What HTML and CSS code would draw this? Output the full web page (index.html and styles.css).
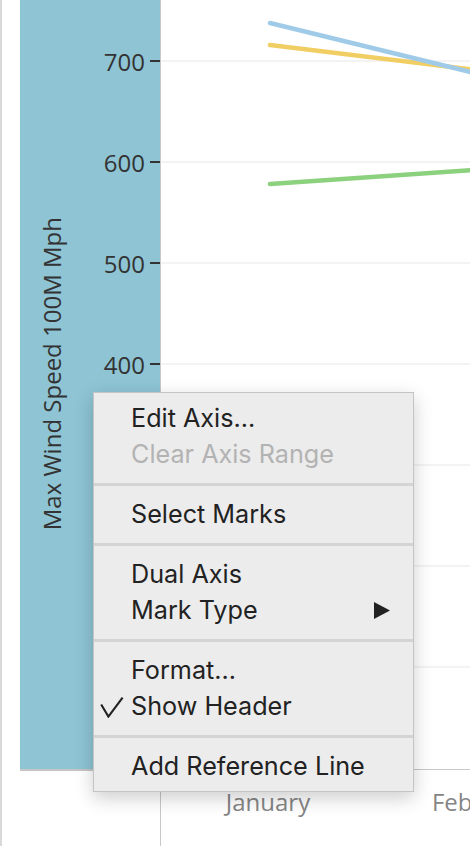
FILE: index.html
```html
<!DOCTYPE html>
<html>
<head>
<meta charset="utf-8">
<link rel="stylesheet" href="styles.css">
</head>
<body>
<div class="page">
  <div class="gutter"></div>
  <div class="left">
    <div class="axis">
      <div class="title-col"><span class="title">Max Wind Speed 100M Mph</span></div>
      <div class="ticks">
        <div class="tick"><span class="tick-label">700</span><span class="tick-mark"></span></div>
        <div class="tick"><span class="tick-label">600</span><span class="tick-mark"></span></div>
        <div class="tick"><span class="tick-label">500</span><span class="tick-mark"></span></div>
        <div class="tick"><span class="tick-label">400</span><span class="tick-mark"></span></div>
        <div class="tick"><span class="tick-label">300</span><span class="tick-mark"></span></div>
        <div class="tick"><span class="tick-label">200</span><span class="tick-mark"></span></div>
        <div class="tick"><span class="tick-label">100</span><span class="tick-mark"></span></div>
      </div>
    </div>
  </div>
  <div class="plot">
    <svg class="chart" width="309" height="769" viewBox="0 0 309 769">
      <g stroke="#efefef" stroke-width="1.5">
        <line x1="0" y1="61" x2="309" y2="61"/>
        <line x1="0" y1="162" x2="309" y2="162"/>
        <line x1="0" y1="263" x2="309" y2="263"/>
        <line x1="0" y1="364" x2="309" y2="364"/>
        <line x1="0" y1="465" x2="309" y2="465"/>
        <line x1="0" y1="566" x2="309" y2="566"/>
        <line x1="0" y1="667" x2="309" y2="667"/>
      </g>
      <g fill="none" stroke-width="4.5" stroke-linecap="round">
        <line x1="109" y1="184" x2="320" y2="169.5" stroke="#8cd17d"/>
        <line x1="109" y1="45" x2="320" y2="70.5" stroke="#f1ce63"/>
        <line x1="109" y1="23" x2="320" y2="74.5" stroke="#a0cbe8"/>
      </g>
    </svg>
    <div class="xaxis">
      <div class="xcat">January</div>
      <div class="xcat">February</div>
    </div>
  </div>
</div>

<div class="menu">
  <div class="item"><span class="check"></span><span class="label">Edit Axis...</span></div>
  <div class="item disabled"><span class="check"></span><span class="label">Clear Axis Range</span></div>
  <div class="sep"></div>
  <div class="item"><span class="check"></span><span class="label">Select Marks</span></div>
  <div class="sep"></div>
  <div class="item"><span class="check"></span><span class="label">Dual Axis</span></div>
  <div class="item"><span class="check"></span><span class="label">Mark Type</span>
    <svg class="arrow" width="16" height="17" viewBox="0 0 16 17"><polygon points="0,0 16,8.5 0,17" fill="#222"/></svg>
  </div>
  <div class="sep"></div>
  <div class="item"><span class="check"></span><span class="label">Format...</span></div>
  <div class="item"><span class="check"><svg class="tick-icon" width="24" height="21" viewBox="0 0 24 21"><polyline points="1.2,7.5 8.4,19.6 22.6,0.6" fill="none" stroke="#222" stroke-width="2.1" stroke-linejoin="miter"/></svg></span><span class="label">Show Header</span></div>
  <div class="sep"></div>
  <div class="item"><span class="check"></span><span class="label">Add Reference Line</span></div>
</div>
</body>
</html>
```

FILE: styles.css
```css
html, body {
  margin: 0;
  padding: 0;
}
body {
  width: 470px;
  height: 846px;
  overflow: hidden;
  background: #ffffff;
  position: relative;
  font-family: "Open Sans", "Liberation Sans", sans-serif;
}
.page {
  display: flex;
  height: 846px;
  border-left: 2px solid #d9d9d9;
  box-sizing: border-box;
}
.gutter {
  width: 18px;
  flex: none;
}
.left {
  width: 141px;
  flex: none;
  border-right: 1px solid #c8c8c8;
  box-sizing: border-box;
}
.axis {
  height: 769px;
  background: #8ec4d4;
  border-bottom: 2px solid #c6c6c6;
  display: flex;
  overflow: hidden;
}
.title-col {
  width: 64px;
  flex: none;
  display: flex;
  align-items: center;
  justify-content: center;
  padding-bottom: 22px;
  box-sizing: border-box;
}
.title {
  writing-mode: vertical-rl;
  transform: rotate(180deg);
  font-size: 24px;
  line-height: 30px;
  color: #333333;
  white-space: nowrap;
}
.ticks {
  flex: 1;
  display: flex;
  flex-direction: column;
  padding-top: 10.5px;
}
.tick {
  height: 101px;
  flex: none;
  display: flex;
  align-items: center;
  justify-content: flex-end;
  gap: 5px;
}
.tick-label {
  font-size: 24px;
  line-height: 30px;
  color: #333333;
  margin-top: 2px;
}
.tick-mark {
  width: 10px;
  height: 2px;
  background: #333333;
}
.plot {
  flex: 1;
  display: flex;
  flex-direction: column;
  overflow: hidden;
}
.chart {
  display: block;
  flex: none;
  border-bottom: 1px solid #c8c8c8;
}
.xaxis {
  display: flex;
  padding-top: 16px;
}
.xcat {
  width: 214px;
  flex: none;
  text-align: center;
  font-size: 24px;
  line-height: 32px;
  color: #858585;
  white-space: nowrap;
}
.menu {
  position: absolute;
  left: 93px;
  top: 392px;
  width: 321px;
  height: 400px;
  box-sizing: border-box;
  background: #ececec;
  border: 1px solid #c4c4c4;
  box-shadow: 0 6px 18px rgba(0, 0, 0, 0.2);
  padding: 7px 0 7px 0;
  font-family: "Inter", "Liberation Sans", sans-serif;
}
.item {
  height: 36px;
  display: flex;
  align-items: center;
  font-size: 25.2px;
  line-height: 30px;
  color: #222222;
  padding-right: 23px;
}
.item.disabled {
  color: #b3b3b3;
}
.check {
  width: 37px;
  flex: none;
  display: flex;
  align-items: center;
}
.tick-icon {
  margin-left: 6px;
  margin-top: 2px;
}
.label {
  white-space: nowrap;
}
.arrow {
  margin-left: auto;
}
.sep {
  height: 3px;
  background: #d4d4d4;
  margin: 10.5px 0;
}
```
